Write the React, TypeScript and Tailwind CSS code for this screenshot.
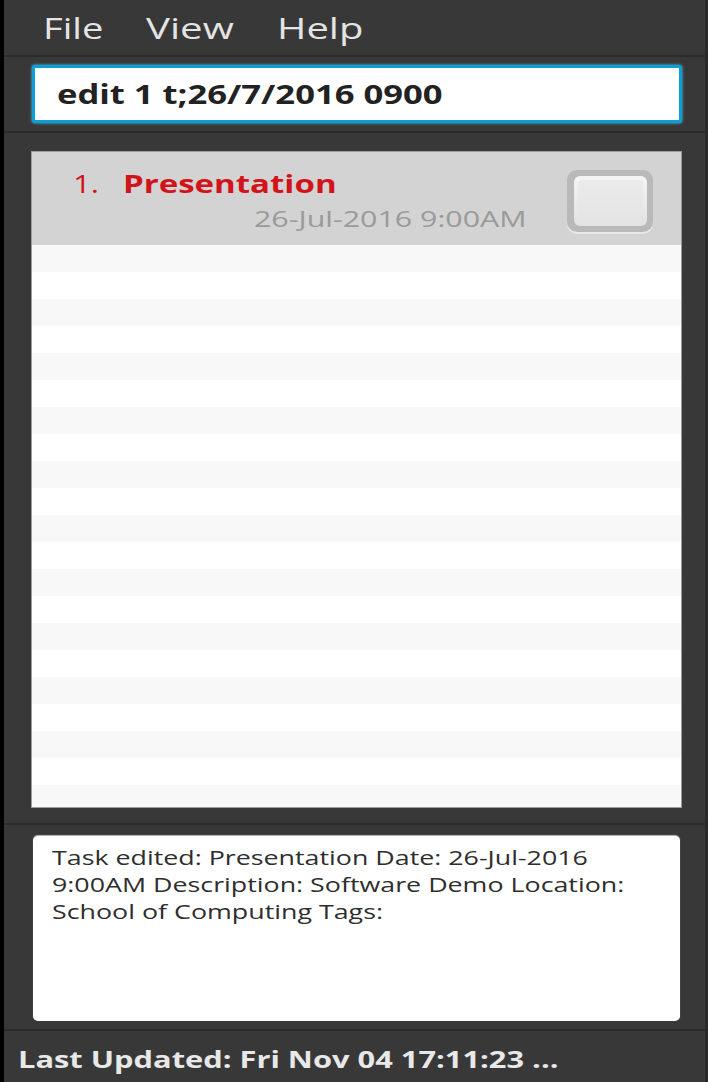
import React from 'react';

const font = { fontFamily: '"Open Sans", "Noto Sans", sans-serif' };

export default function App() {
  const stripes = Array.from({ length: 21 }, (_, i) => i);
  const resultLines = [
    'Task edited: Presentation Date: 26-Jul-2016',
    '9:00AM Description: Software Demo Location:',
    'School of Computing Tags:',
  ];
  return (
    <div
      className="flex h-[1082px] w-[708px] flex-col overflow-hidden border-l-4 border-r-[3px] border-l-black border-r-[#2a2a2a] bg-[#383838]"
      style={font}
    >
      {/* menu bar */}
      <div className="flex h-[57px] shrink-0 items-center border-b-2 border-[#2b2b2b] pl-[39px] text-[30px] font-normal text-[#e4e4e4]">
        <span className="w-[103px]">
          <span className="inline-block origin-left scale-x-[1.27]">File</span>
        </span>
        <span className="w-[131px]">
          <span className="inline-block origin-left scale-x-[1.34]">View</span>
        </span>
        <span>
          <span className="inline-block origin-left scale-x-[1.33]">Help</span>
        </span>
      </div>

      {/* command box */}
      <div className="shrink-0 border-b-2 border-[#2b2b2b] pb-[8px] pl-[28px] pr-[23px] pt-[8px]">
        <div className="flex h-[58px] items-center rounded-[3px] border-[3px] border-[#0a9fd6] bg-white pl-[22px] text-[26px] font-bold text-[#222] shadow-[0_0_3px_#5cc8f0]">
          <span className="inline-block origin-left scale-x-[1.33] whitespace-nowrap">edit 1 t;26/7/2016 0900</span>
        </div>
      </div>

      {/* task list */}
      <div className="flex min-h-0 flex-1 flex-col border-b-2 border-[#2b2b2b] pb-[15px] pl-[27px] pr-[23px] pt-[18px]">
        <div className="flex flex-1 flex-col overflow-hidden border border-[#9c9c9c] bg-white">
          <div className="flex h-[93px] shrink-0 items-start justify-between bg-[#d3d3d3] pl-[41px] pr-[28px]">
            <div className="flex flex-col">
              <div className="mt-[13px] flex items-baseline text-[#d2141a]">
                <span className="w-[50px]">
                  <span className="inline-block origin-left scale-x-[1.25] text-[25px]">1.</span>
                </span>
                <span className="inline-block origin-left scale-x-[1.32] whitespace-nowrap text-[25px] font-bold">Presentation</span>
              </div>
              <div className="ml-[181px] mt-[-1px] whitespace-nowrap text-[22px] text-[#9a9a9a]">
                <span className="inline-block origin-left scale-x-[1.38]">26-Jul-2016 9:00AM</span>
              </div>
            </div>
            <div className="mt-[18px] flex h-[62px] w-[86px] items-center justify-center rounded-[10px] bg-[#b9b9b9] shadow-[0_2px_0_#e8e8e8]">
              <div className="h-[50px] w-[73px] rounded-[6px] bg-gradient-to-b from-[#f4f4f4] to-[#e2e2e2] p-[4px]">
                <div className="h-full w-full rounded-[4px] bg-gradient-to-b from-[#ebebeb] to-[#e4e4e4]" />
              </div>
            </div>
          </div>
          {stripes.map((i) => (
            <div
              key={i}
              className={i % 2 === 0 ? 'h-[27px] shrink-0 bg-[#f8f8f8]' : 'h-[27px] shrink-0 bg-white'}
            />
          ))}
        </div>
      </div>

      {/* result display */}
      <div className="shrink-0 border-b-2 border-[#2b2b2b] pb-[8px] pl-[29px] pr-[25px] pt-[11px]">
        <div className="h-[185px] rounded-[5px] bg-white pl-[19px] pr-[20px] pt-[8px] text-[20px] leading-[27px] text-[#2e2e2e] shadow-[0_-1px_1px_#bbb]">
          {resultLines.map((line) => (
            <div key={line} className="whitespace-nowrap">
              <span className="inline-block origin-left scale-x-[1.34]">{line}</span>
            </div>
          ))}
        </div>
      </div>

      {/* status bar */}
      <div className="flex h-[51px] shrink-0 items-center pl-[14px] pt-[6px] text-[23px] font-bold text-[#e8e8e8]">
        <span className="inline-block origin-left scale-x-[1.34] whitespace-nowrap">Last Updated: Fri Nov 04 17:11:23 ...</span>
      </div>
    </div>
  );
}
